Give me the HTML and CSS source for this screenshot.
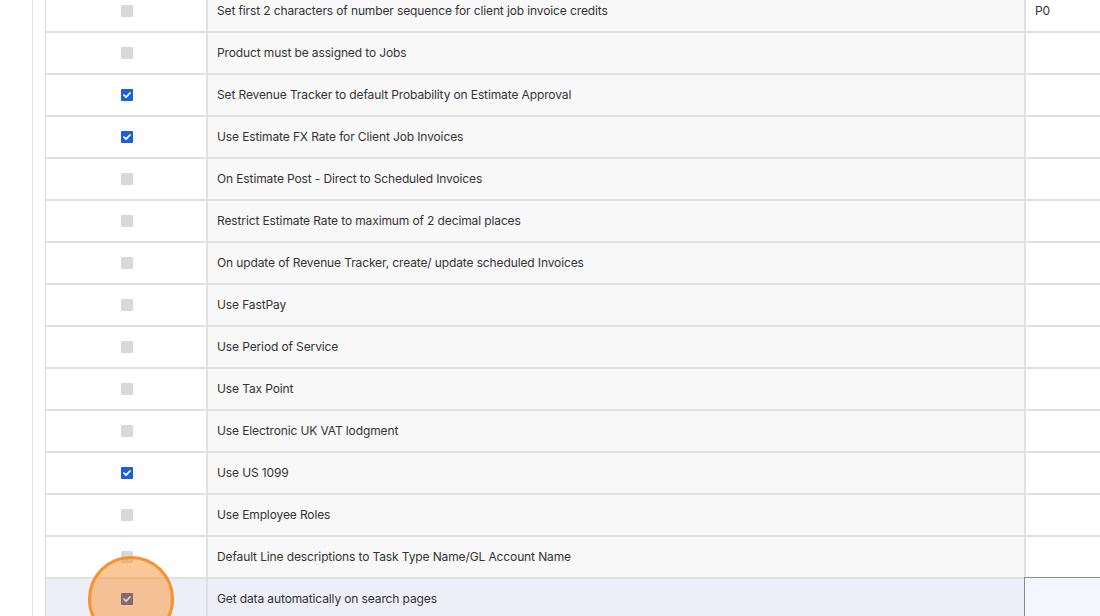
FILE: index.html
```html
<!DOCTYPE html>
<html>
  <head>
    <meta charset="utf-8">
    <title>Settings</title>
    <link rel="stylesheet" href="styles.css">
  </head>
  <body>
  <div class="page">
    <div class="settings">
      <div class="row">
        <div class="cell check"><span class="box"></span></div>
        <div class="cell label">Set first 2 characters of number sequence for client job invoice credits</div>
        <div class="cell value">P0</div>
      </div>
      <div class="row">
        <div class="cell check"><span class="box"></span></div>
        <div class="cell label">Product must be assigned to Jobs</div>
        <div class="cell value"></div>
      </div>
      <div class="row">
        <div class="cell check"><span class="box on"><svg viewBox="0 0 12 12"><path d="M3 6.2 5.1 8.2 9 4" /></svg></span></div>
        <div class="cell label">Set Revenue Tracker to default Probability on Estimate Approval</div>
        <div class="cell value"></div>
      </div>
      <div class="row">
        <div class="cell check"><span class="box on"><svg viewBox="0 0 12 12"><path d="M3 6.2 5.1 8.2 9 4" /></svg></span></div>
        <div class="cell label">Use Estimate FX Rate for Client Job Invoices</div>
        <div class="cell value"></div>
      </div>
      <div class="row">
        <div class="cell check"><span class="box"></span></div>
        <div class="cell label">On Estimate Post - Direct to Scheduled Invoices</div>
        <div class="cell value"></div>
      </div>
      <div class="row">
        <div class="cell check"><span class="box"></span></div>
        <div class="cell label">Restrict Estimate Rate to maximum of 2 decimal places</div>
        <div class="cell value"></div>
      </div>
      <div class="row">
        <div class="cell check"><span class="box"></span></div>
        <div class="cell label">On update of Revenue Tracker, create/ update scheduled Invoices</div>
        <div class="cell value"></div>
      </div>
      <div class="row">
        <div class="cell check"><span class="box"></span></div>
        <div class="cell label">Use FastPay</div>
        <div class="cell value"></div>
      </div>
      <div class="row">
        <div class="cell check"><span class="box"></span></div>
        <div class="cell label">Use Period of Service</div>
        <div class="cell value"></div>
      </div>
      <div class="row">
        <div class="cell check"><span class="box"></span></div>
        <div class="cell label">Use Tax Point</div>
        <div class="cell value"></div>
      </div>
      <div class="row">
        <div class="cell check"><span class="box"></span></div>
        <div class="cell label">Use Electronic UK VAT lodgment</div>
        <div class="cell value"></div>
      </div>
      <div class="row">
        <div class="cell check"><span class="box on"><svg viewBox="0 0 12 12"><path d="M3 6.2 5.1 8.2 9 4" /></svg></span></div>
        <div class="cell label">Use US 1099</div>
        <div class="cell value"></div>
      </div>
      <div class="row">
        <div class="cell check"><span class="box"></span></div>
        <div class="cell label">Use Employee Roles</div>
        <div class="cell value"></div>
      </div>
      <div class="row">
        <div class="cell check"><span class="box"></span></div>
        <div class="cell label">Default Line descriptions to Task Type Name/GL Account Name</div>
        <div class="cell value"></div>
      </div>
      <div class="row active">
        <div class="cell check"><span class="box on"><svg viewBox="0 0 12 12"><path d="M3 6.2 5.1 8.2 9 4" /></svg></span></div>
        <div class="cell label">Get data automatically on search pages</div>
        <div class="cell value"></div>
      </div>
      <div class="click-mark"></div>
    </div>
  </div>
  </body>
</html>
```

FILE: styles.css
```css
html, body {
  height: 100%;
}
body {
  margin: 0;
  font-family: Inter, "Liberation Sans", sans-serif;
  font-size: 12px;
  letter-spacing: -0.12px;
  color: #333;
  background: #fff;
  overflow: hidden;
}
.page {
  display: flow-root;
  margin-left: 32px;
  padding-left: 12px;
  border-left: 1px solid #e2e2e2;
  height: 100%;
}
.settings {
  position: relative;
  margin-top: -9px;
  width: 1100px;
  border-left: 1px solid #dcdcdc;
}
.row {
  display: grid;
  grid-template-columns: 162px 818px 1fr;
  height: 40px;
  border-bottom: 2px solid #e0e0e0;
}
.cell {
  display: flex;
  align-items: center;
}
.check {
  justify-content: center;
  padding-left: 2px;
  background: #fff;
  border-right: 2px solid #e0e0e0;
}
.label {
  padding-left: 9px;
  padding-bottom: 2px;
  background: #f8f8f8;
  border-right: 2px solid #e0e0e0;
}
.value {
  padding-left: 9px;
  padding-bottom: 2px;
  background: #fff;
}
.box {
  width: 12px;
  height: 12px;
  background: #d8d8d8;
  border-radius: 1px;
}
.box svg {
  display: block;
  width: 12px;
  height: 12px;
}
.box path {
  fill: none;
  stroke: #fff;
  stroke-width: 1.8;
  stroke-linecap: round;
  stroke-linejoin: round;
}
.box.on {
  background: #1c5fd6;
}
.row.active .check,
.row.active .label {
  background: #eeeef8;
}
.row.active .value {
  background: #f5f5fd;
  border-top: 1px solid #8c8c8c;
  border-left: 1px solid #8c8c8c;
  margin-top: -2px;
  margin-left: -2px;
}
.row.active .box.on {
  background: #0b3fc4;
}
.click-mark {
  position: absolute;
  left: 42px;
  top: 565px;
  width: 80px;
  height: 80px;
  border: 3px solid #f7922d;
  border-radius: 50%;
  background: rgba(247, 147, 47, 0.5);
}
```
